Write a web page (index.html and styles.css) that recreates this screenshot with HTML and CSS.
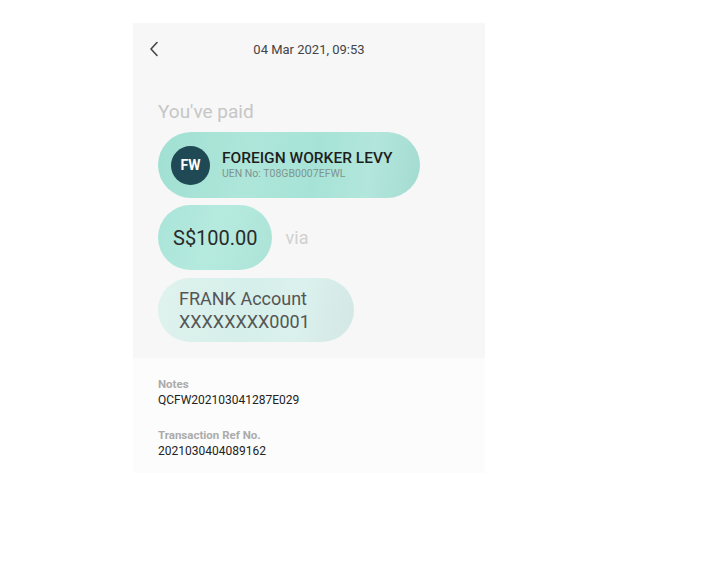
FILE: index.html
```html
<!DOCTYPE html>
<html lang="en">
<head>
    <meta charset="UTF-8">
    <meta name="viewport" content="width=device-width, initial-scale=1.0">
    <title>Payment Details</title>
    <link rel="stylesheet" href="styles.css">
</head>
<body>
    <div class="screen">
        <div class="summary">
            <div class="topbar">
                <span class="back">
                    <svg width="10" height="16" viewBox="0 0 10 16"><path d="M8 1.5 L2 8 L8 14.5" fill="none" stroke="#454545" stroke-width="1.6" stroke-linecap="round" stroke-linejoin="round"/></svg>
                </span>
                <span class="date">04 Mar 2021, 09:53</span>
                <span></span>
            </div>

            <p class="paid-label">You've paid</p>

            <div class="pill payee">
                <div class="avatar">FW</div>
                <div>
                    <div class="payee-name">FOREIGN WORKER LEVY</div>
                    <div class="payee-uen">UEN No: T08GB0007EFWL</div>
                </div>
            </div>

            <div class="amount-row">
                <div class="pill amount">S$100.00</div>
                <span class="via">via</span>
            </div>

            <div class="pill account">
                <div>FRANK Account</div>
                <div>XXXXXXXX0001</div>
            </div>
        </div>

        <div class="details">
            <div class="field">
                <div class="field-label">Notes</div>
                <div class="field-value">QCFW202103041287E029</div>
            </div>
            <div class="field">
                <div class="field-label">Transaction Ref No.</div>
                <div class="field-value">2021030404089162</div>
            </div>
        </div>
    </div>
</body>
</html>
```

FILE: styles.css
```css
body {
    margin: 0;
    background: #ffffff;
    font-family: Roboto, "Liberation Sans", sans-serif;
}
.screen {
    width: 352px;
    margin: 23px 0 0 133px;
}
.summary {
    background: #f7f7f7;
    padding: 0 0 16px 25px;
}
.topbar {
    display: grid;
    grid-template-columns: 1fr auto 1fr;
    align-items: center;
    height: 52px;
    margin-left: -25px;
    padding: 0 16px;
}
.back {
    display: flex;
    align-items: center;
}
.date {
    font-size: 13px;
    color: #444;
}
.paid-label {
    margin: 25px 0 0;
    font-size: 19px;
    line-height: 24px;
    color: #c6c6c6;
}
.pill {
    display: inline-flex;
    align-items: center;
    box-sizing: border-box;
    border-radius: 34px;
}
.payee {
    height: 66px;
    width: 262px;
    margin-top: 8px;
    padding-left: 13px;
    gap: 12px;
    background: linear-gradient(100deg, #a0e0d2 0%, #aee6da 35%, #a6e3d6 60%, #b3e6dc 80%, #a3dbd0 100%);
}
.avatar {
    width: 39px;
    height: 39px;
    border-radius: 50%;
    background: #1f4954;
    color: #fff;
    font-weight: 700;
    font-size: 14px;
    display: flex;
    align-items: center;
    justify-content: center;
}
.payee-name {
    font-size: 15.5px;
    font-weight: 500;
    color: #1e1e1e;
    line-height: 18px;
}
.payee-uen {
    font-size: 10.5px;
    color: #7f948f;
    line-height: 14px;
}
.amount-row {
    display: flex;
    align-items: center;
    margin-top: 7px;
}
.amount {
    height: 65px;
    padding: 0 14px 0 15px;
    font-size: 20px;
    color: #2a2a2a;
    background: linear-gradient(110deg, #a9e4d8 0%, #b6eadf 50%, #ace3d7 100%);
}
.via {
    margin-left: 14px;
    font-size: 18px;
    color: #d0d0d0;
}
.account {
    display: flex;
    flex-direction: column;
    align-items: flex-start;
    justify-content: center;
    width: 196px;
    height: 64px;
    margin-top: 8px;
    padding-left: 21px;
    font-size: 18px;
    line-height: 23px;
    color: #555;
    background: linear-gradient(105deg, #dff2ee 0%, #d6efea 45%, #dbf1ed 70%, #d3e7e4 100%);
}
.details {
    background: #fcfcfc;
    padding: 18px 25px 14px;
}
.field + .field {
    margin-top: 19px;
}
.field-label {
    font-size: 11.5px;
    font-weight: 700;
    color: #ababab;
    line-height: 16px;
}
.field-value {
    font-size: 12px;
    color: #222;
    line-height: 16px;
}
```
